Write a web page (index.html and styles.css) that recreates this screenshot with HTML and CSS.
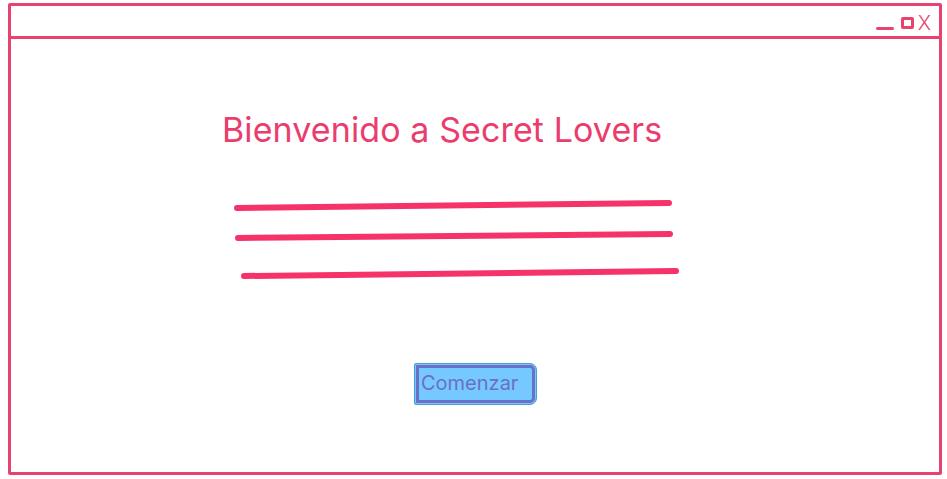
FILE: index.html
```html
<!DOCTYPE html>
<html lang="es">
<head>
<meta charset="utf-8">
<title>Secret Lovers</title>
<link rel="stylesheet" href="styles.css">
</head>
<body>
<div class="window">
  <div class="titlebar">
    <span class="ctl-min"></span>
    <span class="ctl-max"></span>
    <span class="ctl-close">X</span>
  </div>
  <div class="content">
    <h1 class="title">Bienvenido a Secret Lovers</h1>
    <svg class="scribble" width="450" height="84" viewBox="0 0 450 84">
      <path d="M5 12 L437 7" />
      <path d="M6 42 L438 38" />
      <path d="M12 80 L444 75" />
    </svg>
    <div class="btn-wrap">
      <button class="btn">Comenzar</button>
    </div>
  </div>
</div>
</body>
</html>
```
FILE: styles.css
```css
html, body {
  margin: 0;
  padding: 0;
  background: #ffffff;
}
body {
  font-family: Inter, "Liberation Sans", sans-serif;
}
.window {
  box-sizing: border-box;
  margin: 3px 0 0 8px;
  width: 934px;
  height: 472px;
  border: 3px solid #e8426f;
  border-radius: 2px;
  display: flex;
  flex-direction: column;
}
.titlebar {
  box-sizing: border-box;
  height: 33px;
  border-bottom: 3px solid #e8426f;
  display: flex;
  align-items: center;
  justify-content: flex-end;
  padding: 4px 8px 0 0;
  gap: 7px;
}
.ctl-min {
  width: 18px;
  height: 3px;
  background: #e8426f;
  border-radius: 2px;
  margin-top: 10px;
}
.ctl-max {
  box-sizing: border-box;
  width: 13px;
  height: 12px;
  border: 3px solid #e8426f;
  border-radius: 2px;
}
.ctl-close {
  color: #e8426f;
  font-size: 20px;
  line-height: 20px;
  font-weight: 300;
  margin-left: -3px;
}
.content {
  flex: 1;
  display: flex;
  flex-direction: column;
  padding-left: 211px;
}
.title {
  margin: 71px 0 0 0;
  font-size: 34px;
  line-height: 40px;
  font-weight: 400;
  color: #ea3d6d;
  letter-spacing: 0.1px;
}
.scribble {
  margin-top: 46px;
  margin-left: 10px;
  overflow: visible;
}
.scribble path {
  stroke: #f5336a;
  stroke-width: 6;
  stroke-linecap: round;
  fill: none;
}
.btn-wrap {
  margin-top: 83px;
  padding-left: 192px;
}
.btn {
  box-sizing: border-box;
  width: 123px;
  height: 42px;
  background: #76c9ff;
  border: 1px solid #4a9bd8;
  box-shadow: inset 0 0 0 1px #76c9ff, inset 0 0 0 4px #6a70c4;
  border-radius: 2px 7px 7px 2px;
  font-family: Inter, "Liberation Sans", sans-serif;
  font-size: 20px;
  color: #6a70c4;
  padding: 0 0 2px 6px;
  text-align: left;
}
```
